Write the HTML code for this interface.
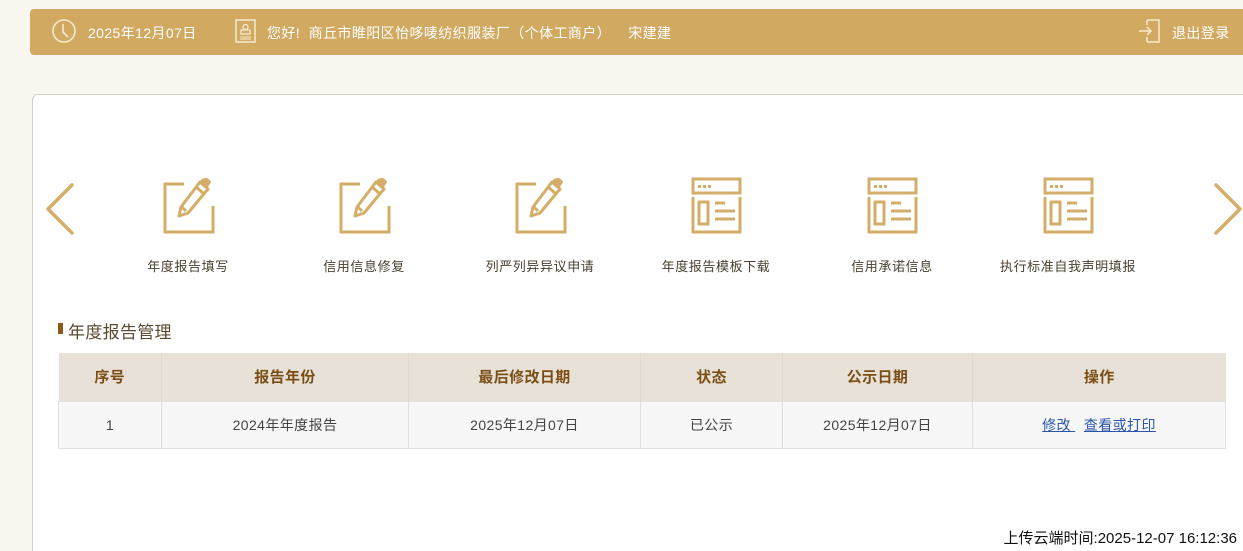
<!DOCTYPE html>
<html style="overflow:hidden;height:551px"><head><meta charset="utf-8"><style>
*{margin:0;padding:0;box-sizing:border-box}
body{width:1243px;height:551px;overflow:hidden;background:#faf7f0;font-family:"Liberation Sans","Noto Sans CJK SC",sans-serif;position:relative}
.bar{position:absolute;left:30px;top:9px;width:1220px;height:46px;background:#d1a960;border-radius:4px 0 0 4px;color:#fff;font-size:14px;letter-spacing:0.4px}
.bar span{position:absolute;top:15px;line-height:18px}
.card{position:absolute;left:32px;top:94px;width:1230px;height:457px;background:#fff;border:1px solid #d4d0c8;border-bottom:none;border-radius:6px 0 0 0}
.lbl{position:absolute;top:256px;font-size:13px;color:#4a4030;width:176px;text-align:center;letter-spacing:0.6px}
svg{position:absolute}
.ttl{position:absolute;left:58px;top:318px;font-size:17px;color:#5a4a30;letter-spacing:0.3px}
.ttl:before{content:"";position:absolute;left:0;top:5px;width:5px;height:11px;background:#8b5a14}
table{position:absolute;left:58px;top:353px;width:1168px;border-collapse:collapse;font-size:14px;letter-spacing:0.4px}
th{background:#e8e1d8;height:48px;color:#7a4e14;font-weight:bold;font-size:15px}
td{background:#f7f7f7;height:47px;text-align:center;color:#444;border:1px solid #e2e2e2}
th+th,td+td{border-left:1px solid #e0d8cc}
a{color:#2a55a8;text-decoration:underline}
.up{position:absolute;right:6px;top:527px;font-size:15px;color:#111}
</style></head><body>
<div class="bar">
<svg style="left:21px;top:9px" width="26" height="26" viewBox="0 0 26 26"><circle cx="13" cy="13" r="11" fill="none" stroke="#f5ead2" stroke-width="1.6"/><path d="M12 6v8l5 5" fill="none" stroke="#f5ead2" stroke-width="1.6"/></svg>
<span style="left:58px">2025年12月07日</span>
<svg style="left:205px;top:10px" width="22" height="24" viewBox="0 0 22 24"><rect x="1" y="1" width="19" height="22" fill="none" stroke="#f5ead2" stroke-width="1.5"/><circle cx="10.5" cy="8" r="2.5" fill="none" stroke="#f5ead2" stroke-width="1.3"/><rect x="6" y="11" width="9" height="4" fill="none" stroke="#f5ead2" stroke-width="1.3"/><path d="M5 18h11M5 20h11" stroke="#f5ead2"/></svg>
<span style="left:237px">您好!&nbsp; 商丘市睢阳区怡哆唛纺织服装厂（个体工商户）&nbsp;&nbsp;&nbsp; 宋建建</span>
<svg style="left:1108px;top:10px" width="24" height="24" viewBox="0 0 24 24"><path d="M9 1h12v22H9M9 1v5M9 18v5" fill="none" stroke="#f5ead2" stroke-width="1.5"/><path d="M1 12h12M9 8l4 4-4 4" fill="none" stroke="#f5ead2" stroke-width="1.5"/></svg>
<span style="left:1142px">退出登录</span>
</div>
<div class="card"></div>
<svg style="left:44px;top:182px" width="32" height="56" viewBox="0 0 32 56"><path d="M28 3L4 27l24 24" fill="none" stroke="#d4ae68" stroke-width="3.5" stroke-linecap="round" stroke-linejoin="round"/></svg>
<svg style="left:1212px;top:182px" width="32" height="56" viewBox="0 0 32 56"><path d="M4 3l24 24L4 51" fill="none" stroke="#d4ae68" stroke-width="3.5" stroke-linecap="round" stroke-linejoin="round"/></svg>
<svg style="left:162px;top:176px" width="54" height="58" viewBox="0 0 54 58"><path d="M22 8H3v48h48V30" fill="none" stroke="#d4ae68" stroke-width="3"/><path d="M38 6l8 7-20 24-9 3 2-9z M34 11l8 7M20 31l4 4" fill="none" stroke="#d4ae68" stroke-width="3" stroke-linejoin="round"/><path d="M40 3q6-3 9 3l-3 5-8-6z" fill="#d4ae68"/></svg>
<svg style="left:338px;top:176px" width="54" height="58" viewBox="0 0 54 58"><path d="M22 8H3v48h48V30" fill="none" stroke="#d4ae68" stroke-width="3"/><path d="M38 6l8 7-20 24-9 3 2-9z M34 11l8 7M20 31l4 4" fill="none" stroke="#d4ae68" stroke-width="3" stroke-linejoin="round"/><path d="M40 3q6-3 9 3l-3 5-8-6z" fill="#d4ae68"/></svg>
<svg style="left:514px;top:176px" width="54" height="58" viewBox="0 0 54 58"><path d="M22 8H3v48h48V30" fill="none" stroke="#d4ae68" stroke-width="3"/><path d="M38 6l8 7-20 24-9 3 2-9z M34 11l8 7M20 31l4 4" fill="none" stroke="#d4ae68" stroke-width="3" stroke-linejoin="round"/><path d="M40 3q6-3 9 3l-3 5-8-6z" fill="#d4ae68"/></svg>
<svg style="left:690px;top:176px" width="54" height="58" viewBox="0 0 54 58"><g fill="none" stroke="#d4ae68" stroke-width="3"><rect x="3" y="3" width="47" height="14"/><path d="M3 21v35h47V21"/><rect x="9" y="26" width="9" height="22"/><path d="M25 27h10M25 35h20M25 43h20"/></g><path d="M8 9h3v3H8zM13 9h3v3h-3zM18 9h3v3h-3z" fill="#d4ae68"/></svg>
<svg style="left:866px;top:176px" width="54" height="58" viewBox="0 0 54 58"><g fill="none" stroke="#d4ae68" stroke-width="3"><rect x="3" y="3" width="47" height="14"/><path d="M3 21v35h47V21"/><rect x="9" y="26" width="9" height="22"/><path d="M25 27h10M25 35h20M25 43h20"/></g><path d="M8 9h3v3H8zM13 9h3v3h-3zM18 9h3v3h-3z" fill="#d4ae68"/></svg>
<svg style="left:1042px;top:176px" width="54" height="58" viewBox="0 0 54 58"><g fill="none" stroke="#d4ae68" stroke-width="3"><rect x="3" y="3" width="47" height="14"/><path d="M3 21v35h47V21"/><rect x="9" y="26" width="9" height="22"/><path d="M25 27h10M25 35h20M25 43h20"/></g><path d="M8 9h3v3H8zM13 9h3v3h-3zM18 9h3v3h-3z" fill="#d4ae68"/></svg>
<div class="lbl" style="left:100px">年度报告填写</div>
<div class="lbl" style="left:276px">信用信息修复</div>
<div class="lbl" style="left:452px">列严列异异议申请</div>
<div class="lbl" style="left:628px">年度报告模板下载</div>
<div class="lbl" style="left:804px">信用承诺信息</div>
<div class="lbl" style="left:980px">执行标准自我声明填报</div>
<div class="ttl">&nbsp;&nbsp;年度报告管理</div>
<table>
<tr><th style="width:103px">序号</th><th style="width:247px">报告年份</th><th style="width:232px">最后修改日期</th><th style="width:142px">状态</th><th style="width:190px">公示日期</th><th>操作</th></tr>
<tr><td>1</td><td>2024年年度报告</td><td>2025年12月07日</td><td>已公示</td><td>2025年12月07日</td><td><a>修改&nbsp;</a>&nbsp; <a>查看或打印</a></td></tr>
</table>
<div class="up">上传云端时间:2025-12-07 16:12:36</div>
</body></html>
